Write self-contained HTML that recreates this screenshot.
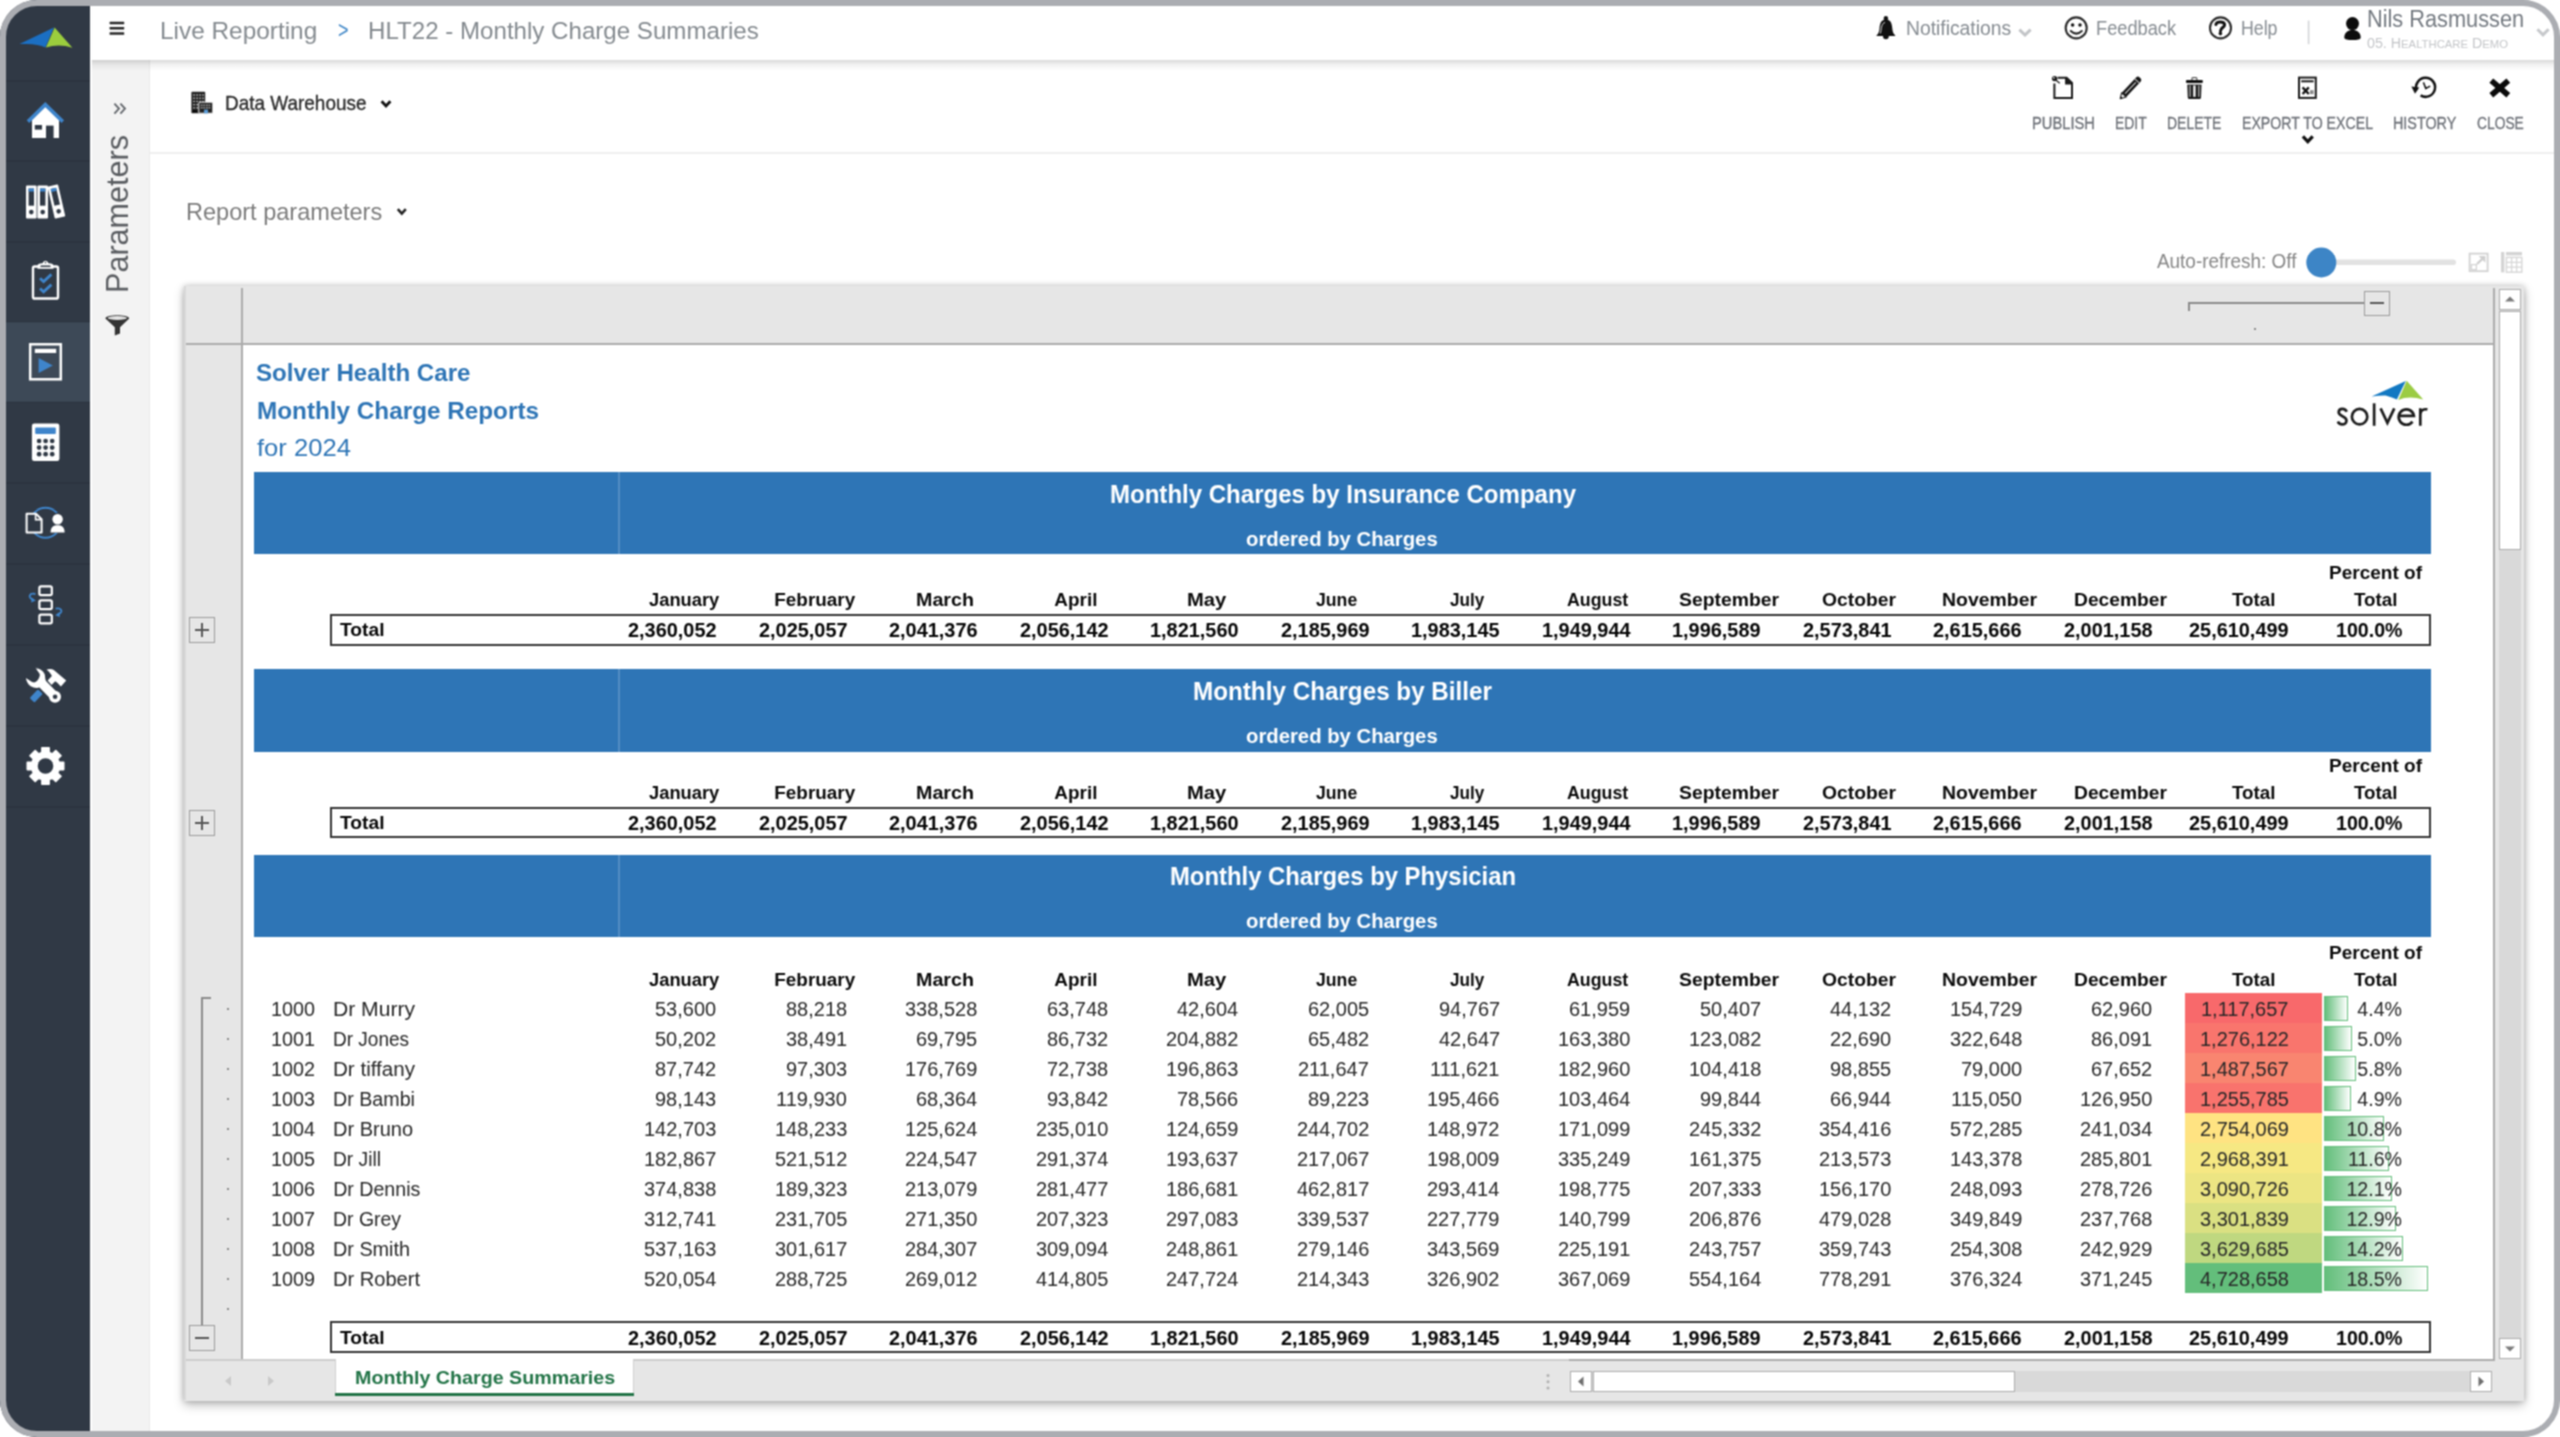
<!DOCTYPE html>
<html><head><meta charset="utf-8"><title>Live Reporting</title>
<style>
html,body{margin:0;padding:0;background:#fff;}
body{width:2560px;height:1437px;position:relative;overflow:hidden;font-family:"Liberation Sans", sans-serif;}
#w{position:absolute;left:0;top:0;width:2560px;height:1437px;overflow:hidden;background:#fff;filter:url(#bl);}
.a{position:absolute;box-sizing:border-box;}
.t{position:absolute;white-space:pre;line-height:1;transform-origin:0 50%;font-family:"Liberation Sans", sans-serif;}
</style></head>
<body>
<svg width="0" height="0" style="position:absolute"><filter id="bl" x="0" y="0" width="100%" height="100%" color-interpolation-filters="sRGB"><feConvolveMatrix order="3" kernelMatrix="1 2 1 2 4 2 1 2 1" divisor="16" edgeMode="duplicate" preserveAlpha="true"/></filter></svg>
<div id="w">
<div class="a" style="left:0px;top:0px;width:90px;height:1437px;background:#303945;"></div>
<div class="a" style="left:90px;top:0px;width:2px;height:1437px;background:#fdfdfd;"></div>
<div class="a" style="left:92px;top:60px;width:58px;height:1377px;background:#f3f3f3;border-right:1px solid #e9e9e9;"></div>
<div class="a" style="left:92px;top:60px;width:2468px;height:11px;background:linear-gradient(to bottom,rgba(0,0,0,.15),rgba(0,0,0,.05) 45%,rgba(0,0,0,0));"></div>
<div class="a" style="left:92px;top:0px;width:2468px;height:60px;background:#fff;"></div>
<div class="a" style="left:150px;top:152px;width:2410px;height:2px;background:#efefef;"></div>
<div class="a" style="left:6px;top:322px;width:84px;height:80px;background:#3d4957;"></div>
<div class="a" style="left:6px;top:79.5px;width:84px;height:2px;background:rgba(0,0,0,.07);"></div>
<div class="a" style="left:6px;top:160px;width:84px;height:2px;background:rgba(0,0,0,.07);"></div>
<div class="a" style="left:6px;top:240.5px;width:84px;height:2px;background:rgba(0,0,0,.07);"></div>
<div class="a" style="left:6px;top:321px;width:84px;height:2px;background:rgba(0,0,0,.07);"></div>
<div class="a" style="left:6px;top:401px;width:84px;height:2px;background:rgba(0,0,0,.07);"></div>
<div class="a" style="left:6px;top:482px;width:84px;height:2px;background:rgba(0,0,0,.07);"></div>
<div class="a" style="left:6px;top:563px;width:84px;height:2px;background:rgba(0,0,0,.07);"></div>
<div class="a" style="left:6px;top:644px;width:84px;height:2px;background:rgba(0,0,0,.07);"></div>
<div class="a" style="left:6px;top:725px;width:84px;height:2px;background:rgba(0,0,0,.07);"></div>
<div class="a" style="left:6px;top:806px;width:84px;height:2px;background:rgba(0,0,0,.07);"></div>
<div class="a" style="left:184px;top:286px;width:2340px;height:1115px;background:#e6e6e6;box-shadow:0 4px 10px rgba(0,0,0,.26),0 0 6px rgba(0,0,0,.20);"></div>
<div class="a" style="left:184px;top:286px;width:2px;height:1114px;background:rgba(0,0,0,.06);"></div>
<div class="a" style="left:243px;top:345px;width:2250px;height:1014px;background:#fff;"></div>
<div class="a" style="left:241px;top:288px;width:2px;height:1072px;background:#ababab;"></div>
<div class="a" style="left:186px;top:343px;width:2308px;height:2px;background:#ababab;"></div>
<div class="a" style="left:2493px;top:288px;width:2px;height:1073px;background:#ababab;"></div>
<div class="a" style="left:186px;top:1359px;width:1383px;height:2px;background:#cdcdcd;"></div>
<div class="a" style="left:1569px;top:1359px;width:926px;height:2px;background:#ababab;"></div>
<div class="a" style="left:2499px;top:289px;width:22px;height:1069px;background:#d9d9d9;"></div>
<div class="a" style="left:2499px;top:289px;width:22px;height:21px;background:#fff;border:1.5px solid #ababab;"></div>
<div class="a" style="left:2499px;top:311px;width:22px;height:239px;background:#fff;border:1.5px solid #ababab;"></div>
<div class="a" style="left:2499px;top:1337.5px;width:22px;height:21px;background:#fff;border:1.5px solid #ababab;"></div>
<svg class="a" style="left:2499px;top:289px;" width="22" height="21" viewBox="0 0 22 21"><path d="M6 12.5 L11 7.5 L16 12.5 Z" fill="#7a7a7a"/></svg>
<svg class="a" style="left:2499px;top:1337.5px;" width="22" height="21" viewBox="0 0 22 21"><path d="M6 8.5 L11 13.5 L16 8.5 Z" fill="#7a7a7a"/></svg>
<div class="a" style="left:335px;top:1359px;width:299px;height:35px;background:#fff;border-left:1px solid #d0d0d0;border-right:1px solid #d0d0d0;"></div>
<div class="a" style="left:334.5px;top:1393px;width:299.5px;height:3.3px;background:#217346;"></div>
<svg class="a" style="left:220px;top:1372px;" width="60" height="18" viewBox="0 0 60 18"><path d="M11 4 L5 9 L11 14 Z" fill="#c9c9c9"/><path d="M48 4 L54 9 L48 14 Z" fill="#c9c9c9"/></svg>
<svg class="a" style="left:1541px;top:1370px;" width="14" height="24" viewBox="0 0 14 24"><circle cx="7" cy="5.6" r="1.5" fill="#b0b0b0"/><circle cx="7" cy="11.8" r="1.5" fill="#b0b0b0"/><circle cx="7" cy="18" r="1.5" fill="#b0b0b0"/></svg>
<div class="a" style="left:1570px;top:1370.5px;width:921.5px;height:21px;background:#d9d9d9;"></div>
<div class="a" style="left:1570px;top:1370.5px;width:22px;height:21px;background:#fff;border:1.5px solid #ababab;"></div>
<div class="a" style="left:1593px;top:1370.5px;width:422px;height:21px;background:#fff;border:1.5px solid #ababab;"></div>
<div class="a" style="left:2469.5px;top:1370.5px;width:22px;height:21px;background:#fff;border:1.5px solid #ababab;"></div>
<svg class="a" style="left:1570px;top:1370.5px;" width="22" height="21" viewBox="0 0 22 21"><path d="M13.5 5.5 L8 10.5 L13.5 15.5 Z" fill="#6e6e6e"/></svg>
<svg class="a" style="left:2469.5px;top:1370.5px;" width="22" height="21" viewBox="0 0 22 21"><path d="M8.5 5.5 L14 10.5 L8.5 15.5 Z" fill="#6e6e6e"/></svg>
<div class="a" style="left:2188px;top:302px;width:178px;height:2px;background:#8a8a8a;"></div>
<div class="a" style="left:2188px;top:302px;width:2px;height:9px;background:#8a8a8a;"></div>
<div class="a" style="left:2364px;top:291px;width:26px;height:25px;background:#e6e6e6;border:1.5px solid #9a9a9a;"></div>
<div class="a" style="left:2370px;top:302px;width:14px;height:2px;background:#555;"></div>
<div class="a" style="left:2254px;top:328px;width:2px;height:2px;background:#8a8a8a;"></div>
<div class="a" style="left:189px;top:617px;width:26px;height:26px;background:#e6e6e6;border:1.5px solid #9a9a9a;"></div>
<div class="a" style="left:195px;top:629px;width:14px;height:2px;background:#555;"></div>
<div class="a" style="left:201px;top:623px;width:2px;height:14px;background:#555;"></div>
<div class="a" style="left:189px;top:810px;width:26px;height:26px;background:#e6e6e6;border:1.5px solid #9a9a9a;"></div>
<div class="a" style="left:195px;top:822px;width:14px;height:2px;background:#555;"></div>
<div class="a" style="left:201px;top:816px;width:2px;height:14px;background:#555;"></div>
<div class="a" style="left:189px;top:1325px;width:26px;height:26px;background:#e6e6e6;border:1.5px solid #9a9a9a;"></div>
<div class="a" style="left:195px;top:1337px;width:14px;height:2px;background:#555;"></div>
<div class="a" style="left:201px;top:997px;width:2px;height:328px;background:#8a8a8a;"></div>
<div class="a" style="left:201px;top:997px;width:10px;height:2px;background:#8a8a8a;"></div>
<div class="a" style="left:227px;top:1008px;width:2px;height:2px;background:#8a8a8a;"></div>
<div class="a" style="left:227px;top:1038px;width:2px;height:2px;background:#8a8a8a;"></div>
<div class="a" style="left:227px;top:1068px;width:2px;height:2px;background:#8a8a8a;"></div>
<div class="a" style="left:227px;top:1098px;width:2px;height:2px;background:#8a8a8a;"></div>
<div class="a" style="left:227px;top:1128px;width:2px;height:2px;background:#8a8a8a;"></div>
<div class="a" style="left:227px;top:1158px;width:2px;height:2px;background:#8a8a8a;"></div>
<div class="a" style="left:227px;top:1188px;width:2px;height:2px;background:#8a8a8a;"></div>
<div class="a" style="left:227px;top:1218px;width:2px;height:2px;background:#8a8a8a;"></div>
<div class="a" style="left:227px;top:1248px;width:2px;height:2px;background:#8a8a8a;"></div>
<div class="a" style="left:227px;top:1278px;width:2px;height:2px;background:#8a8a8a;"></div>
<div class="a" style="left:227px;top:1308px;width:2px;height:2px;background:#8a8a8a;"></div>
<div class="a" style="left:253.5px;top:471.7px;width:2177.5px;height:82.1px;background:#2e75b6;"></div>
<div class="a" style="left:618px;top:471.7px;width:1.5px;height:82.1px;background:rgba(255,255,255,.18);"></div>
<div class="a" style="left:253.5px;top:669.0px;width:2177.5px;height:82.7px;background:#2e75b6;"></div>
<div class="a" style="left:618px;top:669.0px;width:1.5px;height:82.7px;background:rgba(255,255,255,.18);"></div>
<div class="a" style="left:253.5px;top:854.7px;width:2177.5px;height:82.2px;background:#2e75b6;"></div>
<div class="a" style="left:618px;top:854.7px;width:1.5px;height:82.2px;background:rgba(255,255,255,.18);"></div>
<div class="a" style="left:329.6px;top:613.5px;width:2101.4px;height:32px;border:2px solid #333;"></div>
<div class="a" style="left:329.6px;top:806.9px;width:2101.4px;height:31.1px;border:2px solid #333;"></div>
<div class="a" style="left:329.6px;top:1321.4px;width:2101.4px;height:31.2px;border:2px solid #333;"></div>
<div class="a" style="left:2185px;top:992.8px;width:137px;height:30.29px;background:rgb(248,105,107);"></div>
<div class="a" style="left:2323.6px;top:995.9px;width:24.7px;height:24.79px;border:1.5px solid #63be7b;background:linear-gradient(to right,#63be7b,#fff);"></div>
<div class="a" style="left:2185px;top:1022.8px;width:137px;height:30.29px;background:rgb(249,117,109);"></div>
<div class="a" style="left:2323.6px;top:1025.9px;width:28.1px;height:24.79px;border:1.5px solid #63be7b;background:linear-gradient(to right,#63be7b,#fff);"></div>
<div class="a" style="left:2185px;top:1052.8px;width:137px;height:30.29px;background:rgb(249,133,112);"></div>
<div class="a" style="left:2323.6px;top:1055.9px;width:32.6px;height:24.79px;border:1.5px solid #63be7b;background:linear-gradient(to right,#63be7b,#fff);"></div>
<div class="a" style="left:2185px;top:1082.8px;width:137px;height:30.29px;background:rgb(249,115,109);"></div>
<div class="a" style="left:2323.6px;top:1085.9px;width:27.5px;height:24.79px;border:1.5px solid #63be7b;background:linear-gradient(to right,#63be7b,#fff);"></div>
<div class="a" style="left:2185px;top:1112.8px;width:137px;height:30.29px;background:rgb(255,227,130);"></div>
<div class="a" style="left:2323.6px;top:1115.9px;width:60.7px;height:24.79px;border:1.5px solid #63be7b;background:linear-gradient(to right,#63be7b,#fff);"></div>
<div class="a" style="left:2185px;top:1142.8px;width:137px;height:30.29px;background:rgb(246,232,131);"></div>
<div class="a" style="left:2323.6px;top:1145.8px;width:65.2px;height:24.79px;border:1.5px solid #63be7b;background:linear-gradient(to right,#63be7b,#fff);"></div>
<div class="a" style="left:2185px;top:1172.7px;width:137px;height:30.29px;background:rgb(236,229,131);"></div>
<div class="a" style="left:2323.6px;top:1175.8px;width:68.0px;height:24.79px;border:1.5px solid #63be7b;background:linear-gradient(to right,#63be7b,#fff);"></div>
<div class="a" style="left:2185px;top:1202.7px;width:137px;height:30.29px;background:rgb(218,224,130);"></div>
<div class="a" style="left:2323.6px;top:1205.8px;width:72.5px;height:24.79px;border:1.5px solid #63be7b;background:linear-gradient(to right,#63be7b,#fff);"></div>
<div class="a" style="left:2185px;top:1232.7px;width:137px;height:30.29px;background:rgb(191,216,128);"></div>
<div class="a" style="left:2323.6px;top:1235.8px;width:79.8px;height:24.79px;border:1.5px solid #63be7b;background:linear-gradient(to right,#63be7b,#fff);"></div>
<div class="a" style="left:2185px;top:1262.7px;width:137px;height:30.29px;background:rgb(99,190,123);"></div>
<div class="a" style="left:2323.6px;top:1265.8px;width:104.0px;height:24.79px;border:1.5px solid #63be7b;background:linear-gradient(to right,#63be7b,#fff);"></div>
<svg class="a" style="left:0;top:0" width="2560" height="1437" viewBox="0 0 2560 1437"><path d="M19.5 44.1 L53.9 27.6 L45.4 47.4 Q37 43 19.5 44.1 Z" fill="#1b6fc3"/><path d="M54.6 27.6 L72.4 47.8 Q59 43.2 45.9 47.6 Z" fill="#9bcd3d"/><path d="M32 117.5 L45.3 106.5 L59 117.5 L59 138 L32 138 Z" fill="#fff"/><rect x="34.8" y="125" width="7.2" height="4.6" fill="#303945"/><rect x="46" y="125.6" width="7.6" height="12.6" fill="#303945"/><path d="M28 121.6 L45.3 104.6 L62.8 121.6" fill="none" stroke="#3f85cb" stroke-width="3.6" stroke-linejoin="miter"/><g><rect x="26" y="185.5" width="10.6" height="33" rx="1" fill="#fff"/><rect x="28.6" y="188.5" width="5.3999999999999995" height="17.2" fill="#303945"/><rect x="28.6" y="188.5" width="5.3999999999999995" height="3" fill="#3f85cb"/><circle cx="31.3" cy="212.1" r="2.3" fill="#303945"/></g><g><rect x="37.4" y="185.5" width="10.6" height="33" rx="1" fill="#fff"/><rect x="40.0" y="188.5" width="5.3999999999999995" height="17.2" fill="#303945"/><rect x="40.0" y="188.5" width="5.3999999999999995" height="3" fill="#3f85cb"/><circle cx="42.699999999999996" cy="212.1" r="2.3" fill="#303945"/></g><g transform="rotate(-13 56.4 201.5)"><rect x="51" y="185" width="10.8" height="33" rx="1" fill="#fff"/><rect x="53.6" y="188" width="5.6000000000000005" height="17.2" fill="#303945"/><rect x="53.6" y="188" width="5.6000000000000005" height="3" fill="#3f85cb"/><circle cx="56.4" cy="211.6" r="2.3" fill="#303945"/></g><rect x="33" y="266.5" width="25" height="32" rx="1.6" fill="none" stroke="#fff" stroke-width="2.4"/><path d="M37.5 268.8 L37.5 265.5 Q37.5 263.6 40 263.4 L42.4 263.2 Q45.5 258.4 48.6 263.2 L51 263.4 Q53.5 263.6 53.5 265.5 L53.5 268.8 Z" fill="#fff"/><rect x="40.4" y="265.6" width="10.2" height="1.5" rx=".7" fill="#303945"/><circle cx="45.5" cy="262.6" r=".8" fill="#303945"/><path d="M40 278.2 L43.6 281.6 L51.4 274.4 M40 288.4 L43.6 291.8 L51.4 284.6" fill="none" stroke="#3f85cb" stroke-width="2.8"/><rect x="30.2" y="344.3" width="30.6" height="35" fill="none" stroke="#fff" stroke-width="2.5"/><rect x="34.8" y="348.8" width="21.4" height="4.2" fill="#fff"/><path d="M38.6 358 L52.8 365.5 L38.6 373 Z" fill="#3f85cb"/><rect x="31.9" y="423.5" width="27.5" height="37.6" rx="2.4" fill="#fff"/><rect x="35.2" y="427.4" width="20.6" height="6.6" rx="1" fill="#3f85cb"/><circle cx="39.1" cy="441" r="2.35" fill="#303945"/><circle cx="39.1" cy="447.6" r="2.35" fill="#303945"/><circle cx="39.1" cy="454.2" r="2.35" fill="#303945"/><circle cx="45.6" cy="441" r="2.35" fill="#303945"/><circle cx="45.6" cy="447.6" r="2.35" fill="#303945"/><circle cx="45.6" cy="454.2" r="2.35" fill="#303945"/><circle cx="52.2" cy="441" r="2.35" fill="#303945"/><circle cx="52.2" cy="447.6" r="2.35" fill="#303945"/><circle cx="52.2" cy="454.2" r="2.35" fill="#303945"/><circle cx="45.5" cy="522.8" r="15" fill="none" stroke="#3f85cb" stroke-width="2"/><path d="M26.6 513.8 L36 513.8 L41.6 519.2 L41.6 532.6 L26.6 532.6 Z" fill="#303945" stroke="#fff" stroke-width="2" stroke-linejoin="round"/><path d="M35.6 514.2 L35.6 519.6 L41.2 519.6" fill="none" stroke="#fff" stroke-width="1.6"/><circle cx="57.6" cy="519.4" r="6.6" fill="#303945"/><path d="M49 533 L49 524 L66 524 L66 533 Z" fill="#303945"/><circle cx="57.6" cy="519.2" r="5.2" fill="#fff"/><path d="M50.6 532.4 C50.6 527 53.6 525.2 57.6 525.2 C61.6 525.2 64.6 527 64.6 532.4 Z" fill="#fff"/><rect x="39.4" y="586.4" width="12.4" height="8.8" rx="1.6" fill="none" stroke="#fff" stroke-width="2.2"/><rect x="39.4" y="600.4" width="12.4" height="8.8" rx="1.6" fill="none" stroke="#fff" stroke-width="2.2"/><rect x="39.4" y="614.6" width="12.4" height="8.8" rx="1.6" fill="none" stroke="#fff" stroke-width="2.2"/><path d="M35.4 594 C29 592.6 27.6 597.8 33 599.6" fill="none" stroke="#3f85cb" stroke-width="1.8"/><path d="M31.6 597.4 L35.8 600.6 L31.2 602.4 Z" fill="#3f85cb"/><path d="M55.6 608.6 C62 607.4 63.6 612.6 58 614.2" fill="none" stroke="#3f85cb" stroke-width="1.8"/><path d="M59.6 612 L55.2 615.2 L59.8 617 Z" fill="#3f85cb"/><rect x="30.2" y="692.5" width="12.1" height="6.8" rx="1.4" fill="#3f85cb" transform="rotate(133.5 36.25 695.9)"/><path d="M46.5 669.8 C49 668.5 52 668.9 53.8 669.9 L60.3 675.4 L66.2 680.6 L60.9 686.6 L57.3 682.8 L55.2 681.2 L51.5 684.9 L47.6 680.6 L51.9 676 C51 674 49.6 672 46.5 669.8 Z" fill="#fff"/><path d="M34.8 668.1 C39 667 43.8 669.8 45.3 674 C46.3 677.4 45.4 680 47 682.4 L40 688.2 C36 689.4 30.5 688.4 27.8 684.4 C26 681.6 25 679 25.4 676.9 L32.4 681.4 C34 682 36 681.4 36.9 680.2 C38.6 678 39.6 676 39 674 Z" fill="#fff" stroke="#303945" stroke-width="1.3"/><path d="M42.6 684.2 L55 696.7" stroke="#303945" stroke-width="11.4" fill="none"/><circle cx="55" cy="696.7" r="6.7" fill="#303945"/><path d="M41 682.6 L55 696.7" stroke="#fff" stroke-width="9.2" fill="none"/><circle cx="55" cy="696.7" r="6" fill="#fff"/><circle cx="55.1" cy="696.8" r="2.3" fill="#303945"/><path d="M41.9 752.5 L41.9 747.8 L49.1 747.8 L49.1 752.5 L52.5 753.9 L55.8 750.5 L61.0 755.7 L57.6 759.0 L59.0 762.4 L63.7 762.4 L63.7 769.6 L59.0 769.6 L57.6 773.0 L61.0 776.3 L55.8 781.5 L52.5 778.1 L49.1 779.5 L49.1 784.2 L41.9 784.2 L41.9 779.5 L38.5 778.1 L35.2 781.5 L30.0 776.3 L33.4 773.0 L32.0 769.6 L27.3 769.6 L27.3 762.4 L32.0 762.4 L33.4 759.0 L30.0 755.7 L35.2 750.5 L38.5 753.9 Z" fill="#fff" stroke="#fff" stroke-width="1.6" stroke-linejoin="round"/><circle cx="45.5" cy="766" r="7.8" fill="#303945"/><rect x="109.6" y="21.7" width="14.6" height="2.5" rx=".4" fill="#262626"/><rect x="109.6" y="27" width="14.6" height="2.5" rx=".4" fill="#262626"/><rect x="109.6" y="32.3" width="14.6" height="2.5" rx=".4" fill="#262626"/><g transform="translate(1866 8)"><circle cx="19.9" cy="10.3" r="2.2" fill="#111"/><path d="M19.9 11.6 C16 11.6 13.9 14.2 13.5 20.6 C13.2 24.6 12.2 26 10.6 27.2 L10.6 28.1 L29.2 28.1 L29.2 27.2 C27.6 26 26.6 24.6 26.3 20.6 C25.9 14.2 23.8 11.6 19.9 11.6 Z" fill="#111"/><path d="M17 28 A2.9 3.2 0 0 0 22.8 28 Z" fill="#111"/><path d="M14.3 25.4 C15.6 22 14.6 16 19 14.4" stroke="#fff" stroke-width="1" fill="none" opacity=".85"/></g><path d="M2019.4 29.6 L2025 35 L2030.6 29.6" fill="none" stroke="#c2c4c7" stroke-width="3"/><circle cx="2076.2" cy="27.9" r="10.5" fill="none" stroke="#2a2a2a" stroke-width="2.1"/><circle cx="2072.6" cy="25" r="1.75" fill="#111"/><circle cx="2080" cy="25" r="1.75" fill="#111"/><path d="M2070.8 31 Q2076.3 36.2 2081.8 31" fill="none" stroke="#222" stroke-width="2" stroke-linecap="round"/><circle cx="2220.5" cy="27.9" r="10.5" fill="none" stroke="#2a2a2a" stroke-width="2.1"/><path d="M2215.9 24.6 C2216.4 21.4 2224.6 20.8 2224.6 24.8 C2224.6 27.6 2220.5 27.6 2220.5 31" fill="none" stroke="#111" stroke-width="3" stroke-linecap="round" stroke-linejoin="round"/><circle cx="2220.4" cy="33.6" r="1.8" fill="#111"/><rect x="2307.8" y="20.6" width="1.6" height="23.6" fill="#d2d4d7"/><circle cx="2352.5" cy="23.6" r="6.5" fill="#0c0c0c"/><path d="M2344.3 37.4 C2344.3 32.6 2348 30 2352.5 30 C2357 30 2360.7 32.6 2360.7 37.4 C2360.7 39.4 2357 40 2352.5 40 C2348 40 2344.3 39.4 2344.3 37.4 Z" fill="#0c0c0c"/><path d="M2537.4 29.2 L2543 34.8 L2548.6 29.2" fill="none" stroke="#c6c8cb" stroke-width="3"/><path d="M114.4 103.6 L119 108.6 L114.4 113.6 M120.4 103.6 L125 108.6 L120.4 113.6" fill="none" stroke="#63676c" stroke-width="1.9"/><path d="M105.4 318.6 C105.4 314.2 129.2 314.2 129.2 318.6 L120 327.2 L120 333.4 L114.8 335.4 L114.8 327.2 Z" fill="#333"/><ellipse cx="117.3" cy="318" rx="9.6" ry="1.9" fill="#e4e4e4"/><rect x="191.4" y="91.8" width="13.8" height="21.4" rx=".8" fill="#222"/><rect x="198.8" y="102.2" width="14" height="11" rx=".8" fill="#222" stroke="#fff" stroke-width=".9"/><rect x="193.2" y="94.4" width="1.8" height="1.3" fill="#bdbdbd"/><rect x="196.2" y="94.4" width="1.8" height="1.3" fill="#bdbdbd"/><rect x="199.2" y="94.4" width="1.8" height="1.3" fill="#bdbdbd"/><rect x="202.2" y="94.4" width="1.8" height="1.3" fill="#bdbdbd"/><rect x="193.2" y="97.6" width="1.8" height="1.3" fill="#bdbdbd"/><rect x="196.2" y="97.6" width="1.8" height="1.3" fill="#bdbdbd"/><rect x="199.2" y="97.6" width="1.8" height="1.3" fill="#bdbdbd"/><rect x="202.2" y="97.6" width="1.8" height="1.3" fill="#bdbdbd"/><rect x="193.2" y="100.8" width="1.8" height="1.3" fill="#bdbdbd"/><rect x="196.2" y="100.8" width="1.8" height="1.3" fill="#bdbdbd"/><rect x="199.2" y="100.8" width="1.8" height="1.3" fill="#bdbdbd"/><rect x="202.2" y="100.8" width="1.8" height="1.3" fill="#bdbdbd"/><rect x="193.2" y="104" width="1.8" height="1.3" fill="#bdbdbd"/><rect x="196.2" y="104" width="1.8" height="1.3" fill="#bdbdbd"/><rect x="193.2" y="107.2" width="1.8" height="1.3" fill="#bdbdbd"/><rect x="196.2" y="107.2" width="1.8" height="1.3" fill="#bdbdbd"/><rect x="200.8" y="104.6" width="1.7" height="1.2" fill="#c8c8c8"/><rect x="203.4" y="104.6" width="1.7" height="1.2" fill="#c8c8c8"/><rect x="206" y="104.6" width="1.7" height="1.2" fill="#c8c8c8"/><rect x="208.6" y="104.6" width="1.7" height="1.2" fill="#c8c8c8"/><rect x="200.8" y="107.2" width="1.7" height="1.2" fill="#c8c8c8"/><rect x="203.4" y="107.2" width="1.7" height="1.2" fill="#c8c8c8"/><rect x="206" y="107.2" width="1.7" height="1.2" fill="#c8c8c8"/><rect x="208.6" y="107.2" width="1.7" height="1.2" fill="#c8c8c8"/><rect x="204" y="109.6" width="4" height="3.8" fill="#5b9bd5"/><rect x="192.6" y="110.4" width="4.2" height="1.6" fill="#000"/><path d="M381.6 101.19999999999999 L386 106.0 L390.4 101.19999999999999" fill="none" stroke="#111" stroke-width="2.8" stroke-linejoin="miter"/><path d="M397.8 209.20000000000002 L401.8 213.6 L405.8 209.20000000000002" fill="none" stroke="#222" stroke-width="2.6" stroke-linejoin="miter"/><path d="M2302.9 136.3 L2307.8 141.7 L2312.7000000000003 136.3" fill="none" stroke="#111" stroke-width="3.2" stroke-linejoin="miter"/><path d="M2057.6 77.8 L2066.6 77.8 L2072 83 L2072 97.9 L2054.4 97.9 L2054.4 83.4" fill="none" stroke="#1a1a1a" stroke-width="2"/><path d="M2066 77.8 L2066 83.6 L2072 83.6" fill="none" stroke="#1a1a1a" stroke-width="1.8"/><path d="M2066 78 L2071.8 83.6 L2066 83.6 Z" fill="#1a1a1a"/><circle cx="2054.6" cy="78.6" r="2.7" fill="#1a1a1a"/><circle cx="2053.8" cy="77.8" r=".9" fill="#ddd"/><path d="M2056 80.2 L2059.8 83.2" stroke="#1a1a1a" stroke-width="1.3"/><g transform="translate(2130.6 87.8) rotate(-46.5)"><path d="M-9.6 -3.1 L11.2 -3.1 Q13.8 -3.1 13.8 -0.6 L13.8 .6 Q13.8 3.1 11.2 3.1 L-9.6 3.1 Z" fill="#161616"/><path d="M-9.8 -3.1 L-15 0 L-9.8 3.1 Z" fill="#fff" stroke="#161616" stroke-width="1.1" stroke-linejoin="round"/><path d="M-15 0 L-12.8 -1.3 L-12.8 1.3 Z" fill="#161616"/><rect x="-8" y="-.55" width="15.6" height="1.1" fill="#d8d8d8"/><rect x="9" y="-3.1" width="1" height="6.2" fill="#cfcfcf"/></g><rect x="2191.9" y="77.6" width="5" height="3" rx="1" fill="none" stroke="#555" stroke-width="1.2"/><rect x="2185.9" y="80" width="17" height="3" rx="1.2" fill="#111"/><path d="M2187.3 84.4 L2201.5 84.4 L2201 97.4 Q2201 99 2199.4 99 L2189.4 99 Q2187.8 99 2187.8 97.4 Z" fill="#1a1a1a"/><rect x="2189.2" y="85.4" width="1.6" height="11.4" fill="#9a9a9a"/><rect x="2193.2" y="85.4" width="2.4" height="11.4" fill="#f4f4f4"/><rect x="2198" y="85.4" width="1.6" height="11.4" fill="#9a9a9a"/><rect x="2299" y="77.6" width="16.8" height="20.3" fill="none" stroke="#1a1a1a" stroke-width="2"/><rect x="2301.2" y="80.3" width="12.4" height="2" fill="#1a1a1a"/><path d="M2302.6 87.4 L2308.8 94 M2308.8 87.4 L2302.6 94" stroke="#111" stroke-width="2.3" fill="none"/><rect x="2310" y="90.2" width="3.6" height="3.9" fill="#8a8a8a"/><path d="M2416.6 90.4 A9.5 9.5 0 1 1 2420.6 95.4" fill="none" stroke="#111" stroke-width="2.5"/><path d="M2411.4 86.6 L2419.2 87.6 L2415 93.8 Z" fill="#111"/><path d="M2423.4 82.4 L2425.8 88.4 L2430.2 86.2" fill="none" stroke="#111" stroke-width="1.5"/><path d="M2424.6 86.4 L2427.6 87.4 L2425.6 89.6 Z" fill="#111"/><path d="M2491.3 80.6 L2508.3 95.2 M2508.3 80.6 L2491.3 95.2" stroke="#0a0a0a" stroke-width="5.8" fill="none"/><rect x="2322" y="259.4" width="134" height="5.6" rx="2.8" fill="#e2e2e2"/><circle cx="2321.3" cy="262.5" r="15" fill="#3d85c6"/><rect x="2469.6" y="253.6" width="18" height="17.6" fill="none" stroke="#d2d2d2" stroke-width="1.8"/><rect x="2471.4" y="264.6" width="5" height="5" fill="#fff" stroke="#d2d2d2" stroke-width="1.2"/><path d="M2477 264 L2484.4 256.8" stroke="#cfcfcf" stroke-width="2.4"/><path d="M2478.6 256 L2485.4 256 L2485.4 262.8 Z" fill="#cfcfcf"/><rect x="2501" y="252" width="3.4" height="20.4" fill="#d4d4d4"/><rect x="2506" y="252" width="16" height="3.4" fill="#d4d4d4"/><rect x="2506.4" y="257.4" width="15.4" height="14.8" fill="none" stroke="#d6d6d6" stroke-width="1.4"/><path d="M2511.6 257.4 V272.2 M2516.6 257.4 V272.2 M2506.4 262.4 H2521.8 M2506.4 267.2 H2521.8" stroke="#d6d6d6" stroke-width="1.2" fill="none"/><path d="M2371.6 396.5 L2405.8 381 L2396.9 399.6 Q2392.6 397.4 2385.6 395.6 Q2380 395.4 2371.6 396.5 Z" fill="#1278c2"/><path d="M2406.7 380.8 L2423.2 399.6 Q2409.1 395.4 2398.3 400 Z" fill="#9bcc43"/><path d="M2346.7 411.8 C2345.8 409.6 2344 408.9 2342.4 408.9 C2340 408.9 2338.7 410.5 2338.7 412.3 C2338.7 416.9 2346.5 415.5 2346.5 420.5 C2346.5 423 2344.5 424.4 2342.2 424.4 C2340.2 424.4 2338.6 423.4 2337.9 421.5" fill="none" stroke="#1c1c1c" stroke-width="2.7"/><circle cx="2359.6" cy="416.65" r="7.7" fill="none" stroke="#1c1c1c" stroke-width="2.7"/><path d="M2374.15 403.3 L2374.15 425.8" fill="none" stroke="#1c1c1c" stroke-width="2.7"/><path d="M2380.6 408.4 L2387.4 422.9 L2394.3 408.4" fill="none" stroke="#1c1c1c" stroke-width="2.7" stroke-linejoin="miter" stroke-miterlimit="6"/><path d="M2398.8 415.9 L2413.9 415.9 A7.65 7.7 0 1 0 2412.5 421.6" fill="none" stroke="#1c1c1c" stroke-width="2.7"/><path d="M2420.3 425.8 L2420.3 408.2 M2420.3 414.6 C2420.4 410.6 2423.2 408.7 2427.4 409.4" fill="none" stroke="#1c1c1c" stroke-width="2.7"/></svg>
<div class="a" style="left:106px;top:134.5px;width:24px;height:158px;"><span style="position:absolute;left:12px;top:79px;white-space:pre;font-size:31.6px;line-height:1;color:#5a5d61;transform:translate(-50%,-50%) rotate(-90deg) scaleX(.967);display:block;">Parameters</span></div>
<span class="t" style="left:160.40px;top:18.97px;font-size:23.9px;color:#848a8f;transform:scaleX(1.0204);">Live Reporting</span>
<span class="t" style="left:337.50px;top:19.31px;font-size:23.5px;color:#3d85c6;transform:scaleX(0.7645);">&gt;</span>
<span class="t" style="left:367.80px;top:18.97px;font-size:23.9px;color:#848a8f;transform:scaleX(1.0091);">HLT22 - Monthly Charge Summaries</span>
<span class="t" style="left:1906.30px;top:19.15px;font-size:19.9px;color:#858b91;transform:scaleX(0.9701);">Notifications</span>
<span class="t" style="left:2096.30px;top:19.15px;font-size:19.9px;color:#858b91;transform:scaleX(0.9169);">Feedback</span>
<span class="t" style="left:2240.50px;top:19.15px;font-size:19.9px;color:#858b91;transform:scaleX(0.8919);">Help</span>
<span class="t" style="left:2367.40px;top:7.73px;font-size:23.0px;color:#737980;transform:scaleX(0.9455);">Nils Rasmussen</span>
<span class="t" style="left:2366.60px;top:36.44px;font-size:14.6px;color:#c3c5c8;transform:scaleX(0.9756);">05. H<span style="font-size:11.6px">EALTHCARE</span> D<span style="font-size:11.6px">EMO</span></span>
<span class="t" style="left:225.40px;top:92.56px;font-size:20.6px;color:#2b2b2b;transform:scaleX(0.9201);-webkit-text-stroke:.35px #2b2b2b;">Data Warehouse</span>
<span class="t" style="left:2032.20px;top:115.16px;font-size:17.3px;color:#6b6f76;transform:scaleX(0.8519);-webkit-text-stroke:.3px #6b6f76;">PUBLISH</span>
<span class="t" style="left:2115.10px;top:115.16px;font-size:17.3px;color:#6b6f76;transform:scaleX(0.8051);-webkit-text-stroke:.3px #6b6f76;">EDIT</span>
<span class="t" style="left:2167.40px;top:115.16px;font-size:17.3px;color:#6b6f76;transform:scaleX(0.8091);-webkit-text-stroke:.3px #6b6f76;">DELETE</span>
<span class="t" style="left:2241.90px;top:115.16px;font-size:17.3px;color:#6b6f76;transform:scaleX(0.8183);-webkit-text-stroke:.3px #6b6f76;">EXPORT TO EXCEL</span>
<span class="t" style="left:2393.10px;top:115.16px;font-size:17.3px;color:#6b6f76;transform:scaleX(0.8308);-webkit-text-stroke:.3px #6b6f76;">HISTORY</span>
<span class="t" style="left:2476.80px;top:115.16px;font-size:17.3px;color:#6b6f76;transform:scaleX(0.7987);-webkit-text-stroke:.3px #6b6f76;">CLOSE</span>
<span class="t" style="left:186.30px;top:199.78px;font-size:24.6px;color:#7b7b7b;transform:scaleX(0.9569);">Report parameters</span>
<span class="t" style="left:2156.90px;top:251.33px;font-size:20.4px;color:#858585;transform:scaleX(0.9271);">Auto-refresh: Off</span>
<span class="t" style="left:256.00px;top:361.54px;font-size:23.7px;color:#2e75b6;font-weight:700;transform:scaleX(1.0182);">Solver Health Care</span>
<span class="t" style="left:256.60px;top:399.84px;font-size:23.7px;color:#2e75b6;font-weight:700;transform:scaleX(1.0252);">Monthly Charge Reports</span>
<span class="t" style="left:256.60px;top:436.94px;font-size:23.7px;color:#2e75b6;transform:scaleX(1.0814);">for 2024</span>
<span class="t" style="left:1109.50px;top:481.75px;font-size:25.1px;color:#fff;font-weight:700;transform:scaleX(0.9576);">Monthly Charges by Insurance Company</span>
<span class="t" style="left:1246.35px;top:528.57px;font-size:20px;color:#fff;font-weight:700;transform:scaleX(1.0145);">ordered by Charges</span>
<span class="t" style="left:1193.00px;top:678.85px;font-size:25.1px;color:#fff;font-weight:700;transform:scaleX(0.9659);">Monthly Charges by Biller</span>
<span class="t" style="left:1246.35px;top:725.67px;font-size:20px;color:#fff;font-weight:700;transform:scaleX(1.0145);">ordered by Charges</span>
<span class="t" style="left:1169.50px;top:864.15px;font-size:25.1px;color:#fff;font-weight:700;transform:scaleX(0.9507);">Monthly Charges by Physician</span>
<span class="t" style="left:1246.35px;top:910.97px;font-size:20px;color:#fff;font-weight:700;transform:scaleX(1.0145);">ordered by Charges</span>
<span class="t" style="left:649.12px;top:591.40px;font-size:18.9px;color:#0a0a0a;font-weight:700;transform:scaleX(0.9701);">January</span>
<span class="t" style="left:774.30px;top:591.40px;font-size:18.9px;color:#0a0a0a;font-weight:700;">February</span>
<span class="t" style="left:916.33px;top:591.40px;font-size:18.9px;color:#0a0a0a;font-weight:700;transform:scaleX(1.0424);">March</span>
<span class="t" style="left:1054.36px;top:591.40px;font-size:18.9px;color:#0a0a0a;font-weight:700;">April</span>
<span class="t" style="left:1186.73px;top:591.40px;font-size:18.9px;color:#0a0a0a;font-weight:700;transform:scaleX(1.0694);">May</span>
<span class="t" style="left:1316.32px;top:591.40px;font-size:18.9px;color:#0a0a0a;font-weight:700;transform:scaleX(0.9344);">June</span>
<span class="t" style="left:1450.30px;top:591.40px;font-size:18.9px;color:#0a0a0a;font-weight:700;transform:scaleX(0.9071);">July</span>
<span class="t" style="left:1567.32px;top:591.40px;font-size:18.9px;color:#0a0a0a;font-weight:700;transform:scaleX(0.9422);">August</span>
<span class="t" style="left:1678.51px;top:591.40px;font-size:18.9px;color:#0a0a0a;font-weight:700;transform:scaleX(1.0242);">September</span>
<span class="t" style="left:1822.04px;top:591.40px;font-size:18.9px;color:#0a0a0a;font-weight:700;transform:scaleX(1.0216);">October</span>
<span class="t" style="left:1942.07px;top:591.40px;font-size:18.9px;color:#0a0a0a;font-weight:700;transform:scaleX(1.0282);">November</span>
<span class="t" style="left:2073.60px;top:591.40px;font-size:18.9px;color:#0a0a0a;font-weight:700;transform:scaleX(1.0180);">December</span>
<span class="t" style="left:2231.75px;top:591.40px;font-size:18.9px;color:#0a0a0a;font-weight:700;transform:scaleX(0.9946);">Total</span>
<span class="t" style="left:2353.75px;top:591.40px;font-size:18.9px;color:#0a0a0a;font-weight:700;transform:scaleX(0.9946);">Total</span>
<span class="t" style="left:2329.00px;top:564.30px;font-size:18.9px;color:#0a0a0a;font-weight:700;transform:scaleX(1.0066);">Percent of</span>
<span class="t" style="left:340.00px;top:621.10px;font-size:18.9px;color:#050505;font-weight:700;transform:scaleX(1.0175);">Total</span>
<span class="t" style="left:627.97px;top:620.76px;font-size:19.3px;color:#050505;font-weight:700;transform:scaleX(1.0320);">2,360,052</span>
<span class="t" style="left:758.50px;top:620.76px;font-size:19.3px;color:#050505;font-weight:700;transform:scaleX(1.0320);">2,025,057</span>
<span class="t" style="left:889.03px;top:620.76px;font-size:19.3px;color:#050505;font-weight:700;transform:scaleX(1.0320);">2,041,376</span>
<span class="t" style="left:1019.56px;top:620.76px;font-size:19.3px;color:#050505;font-weight:700;transform:scaleX(1.0320);">2,056,142</span>
<span class="t" style="left:1150.09px;top:620.76px;font-size:19.3px;color:#050505;font-weight:700;transform:scaleX(1.0320);">1,821,560</span>
<span class="t" style="left:1280.62px;top:620.76px;font-size:19.3px;color:#050505;font-weight:700;transform:scaleX(1.0320);">2,185,969</span>
<span class="t" style="left:1411.15px;top:620.76px;font-size:19.3px;color:#050505;font-weight:700;transform:scaleX(1.0320);">1,983,145</span>
<span class="t" style="left:1541.68px;top:620.76px;font-size:19.3px;color:#050505;font-weight:700;transform:scaleX(1.0320);">1,949,944</span>
<span class="t" style="left:1672.21px;top:620.76px;font-size:19.3px;color:#050505;font-weight:700;transform:scaleX(1.0320);">1,996,589</span>
<span class="t" style="left:1802.74px;top:620.76px;font-size:19.3px;color:#050505;font-weight:700;transform:scaleX(1.0320);">2,573,841</span>
<span class="t" style="left:1933.27px;top:620.76px;font-size:19.3px;color:#050505;font-weight:700;transform:scaleX(1.0320);">2,615,666</span>
<span class="t" style="left:2063.80px;top:620.76px;font-size:19.3px;color:#050505;font-weight:700;transform:scaleX(1.0320);">2,001,158</span>
<span class="t" style="left:2188.90px;top:620.76px;font-size:19.3px;color:#050505;font-weight:700;transform:scaleX(1.0320);">25,610,499</span>
<span class="t" style="left:2335.55px;top:620.76px;font-size:19.3px;color:#050505;font-weight:700;transform:scaleX(1.0160);">100.0%</span>
<span class="t" style="left:649.12px;top:783.90px;font-size:18.9px;color:#0a0a0a;font-weight:700;transform:scaleX(0.9701);">January</span>
<span class="t" style="left:774.30px;top:783.90px;font-size:18.9px;color:#0a0a0a;font-weight:700;">February</span>
<span class="t" style="left:916.33px;top:783.90px;font-size:18.9px;color:#0a0a0a;font-weight:700;transform:scaleX(1.0424);">March</span>
<span class="t" style="left:1054.36px;top:783.90px;font-size:18.9px;color:#0a0a0a;font-weight:700;">April</span>
<span class="t" style="left:1186.73px;top:783.90px;font-size:18.9px;color:#0a0a0a;font-weight:700;transform:scaleX(1.0694);">May</span>
<span class="t" style="left:1316.32px;top:783.90px;font-size:18.9px;color:#0a0a0a;font-weight:700;transform:scaleX(0.9344);">June</span>
<span class="t" style="left:1450.30px;top:783.90px;font-size:18.9px;color:#0a0a0a;font-weight:700;transform:scaleX(0.9071);">July</span>
<span class="t" style="left:1567.32px;top:783.90px;font-size:18.9px;color:#0a0a0a;font-weight:700;transform:scaleX(0.9422);">August</span>
<span class="t" style="left:1678.51px;top:783.90px;font-size:18.9px;color:#0a0a0a;font-weight:700;transform:scaleX(1.0242);">September</span>
<span class="t" style="left:1822.04px;top:783.90px;font-size:18.9px;color:#0a0a0a;font-weight:700;transform:scaleX(1.0216);">October</span>
<span class="t" style="left:1942.07px;top:783.90px;font-size:18.9px;color:#0a0a0a;font-weight:700;transform:scaleX(1.0282);">November</span>
<span class="t" style="left:2073.60px;top:783.90px;font-size:18.9px;color:#0a0a0a;font-weight:700;transform:scaleX(1.0180);">December</span>
<span class="t" style="left:2231.75px;top:783.90px;font-size:18.9px;color:#0a0a0a;font-weight:700;transform:scaleX(0.9946);">Total</span>
<span class="t" style="left:2353.75px;top:783.90px;font-size:18.9px;color:#0a0a0a;font-weight:700;transform:scaleX(0.9946);">Total</span>
<span class="t" style="left:2329.00px;top:756.80px;font-size:18.9px;color:#0a0a0a;font-weight:700;transform:scaleX(1.0066);">Percent of</span>
<span class="t" style="left:340.00px;top:814.40px;font-size:18.9px;color:#050505;font-weight:700;transform:scaleX(1.0175);">Total</span>
<span class="t" style="left:627.97px;top:814.06px;font-size:19.3px;color:#050505;font-weight:700;transform:scaleX(1.0320);">2,360,052</span>
<span class="t" style="left:758.50px;top:814.06px;font-size:19.3px;color:#050505;font-weight:700;transform:scaleX(1.0320);">2,025,057</span>
<span class="t" style="left:889.03px;top:814.06px;font-size:19.3px;color:#050505;font-weight:700;transform:scaleX(1.0320);">2,041,376</span>
<span class="t" style="left:1019.56px;top:814.06px;font-size:19.3px;color:#050505;font-weight:700;transform:scaleX(1.0320);">2,056,142</span>
<span class="t" style="left:1150.09px;top:814.06px;font-size:19.3px;color:#050505;font-weight:700;transform:scaleX(1.0320);">1,821,560</span>
<span class="t" style="left:1280.62px;top:814.06px;font-size:19.3px;color:#050505;font-weight:700;transform:scaleX(1.0320);">2,185,969</span>
<span class="t" style="left:1411.15px;top:814.06px;font-size:19.3px;color:#050505;font-weight:700;transform:scaleX(1.0320);">1,983,145</span>
<span class="t" style="left:1541.68px;top:814.06px;font-size:19.3px;color:#050505;font-weight:700;transform:scaleX(1.0320);">1,949,944</span>
<span class="t" style="left:1672.21px;top:814.06px;font-size:19.3px;color:#050505;font-weight:700;transform:scaleX(1.0320);">1,996,589</span>
<span class="t" style="left:1802.74px;top:814.06px;font-size:19.3px;color:#050505;font-weight:700;transform:scaleX(1.0320);">2,573,841</span>
<span class="t" style="left:1933.27px;top:814.06px;font-size:19.3px;color:#050505;font-weight:700;transform:scaleX(1.0320);">2,615,666</span>
<span class="t" style="left:2063.80px;top:814.06px;font-size:19.3px;color:#050505;font-weight:700;transform:scaleX(1.0320);">2,001,158</span>
<span class="t" style="left:2188.90px;top:814.06px;font-size:19.3px;color:#050505;font-weight:700;transform:scaleX(1.0320);">25,610,499</span>
<span class="t" style="left:2335.55px;top:814.06px;font-size:19.3px;color:#050505;font-weight:700;transform:scaleX(1.0160);">100.0%</span>
<span class="t" style="left:649.12px;top:970.60px;font-size:18.9px;color:#0a0a0a;font-weight:700;transform:scaleX(0.9701);">January</span>
<span class="t" style="left:774.30px;top:970.60px;font-size:18.9px;color:#0a0a0a;font-weight:700;">February</span>
<span class="t" style="left:916.33px;top:970.60px;font-size:18.9px;color:#0a0a0a;font-weight:700;transform:scaleX(1.0424);">March</span>
<span class="t" style="left:1054.36px;top:970.60px;font-size:18.9px;color:#0a0a0a;font-weight:700;">April</span>
<span class="t" style="left:1186.73px;top:970.60px;font-size:18.9px;color:#0a0a0a;font-weight:700;transform:scaleX(1.0694);">May</span>
<span class="t" style="left:1316.32px;top:970.60px;font-size:18.9px;color:#0a0a0a;font-weight:700;transform:scaleX(0.9344);">June</span>
<span class="t" style="left:1450.30px;top:970.60px;font-size:18.9px;color:#0a0a0a;font-weight:700;transform:scaleX(0.9071);">July</span>
<span class="t" style="left:1567.32px;top:970.60px;font-size:18.9px;color:#0a0a0a;font-weight:700;transform:scaleX(0.9422);">August</span>
<span class="t" style="left:1678.51px;top:970.60px;font-size:18.9px;color:#0a0a0a;font-weight:700;transform:scaleX(1.0242);">September</span>
<span class="t" style="left:1822.04px;top:970.60px;font-size:18.9px;color:#0a0a0a;font-weight:700;transform:scaleX(1.0216);">October</span>
<span class="t" style="left:1942.07px;top:970.60px;font-size:18.9px;color:#0a0a0a;font-weight:700;transform:scaleX(1.0282);">November</span>
<span class="t" style="left:2073.60px;top:970.60px;font-size:18.9px;color:#0a0a0a;font-weight:700;transform:scaleX(1.0180);">December</span>
<span class="t" style="left:2231.75px;top:970.60px;font-size:18.9px;color:#0a0a0a;font-weight:700;transform:scaleX(0.9946);">Total</span>
<span class="t" style="left:2353.75px;top:970.60px;font-size:18.9px;color:#0a0a0a;font-weight:700;transform:scaleX(0.9946);">Total</span>
<span class="t" style="left:2329.00px;top:943.50px;font-size:18.9px;color:#0a0a0a;font-weight:700;transform:scaleX(1.0066);">Percent of</span>
<span class="t" style="left:340.00px;top:1329.20px;font-size:18.9px;color:#050505;font-weight:700;transform:scaleX(1.0175);">Total</span>
<span class="t" style="left:627.97px;top:1328.86px;font-size:19.3px;color:#050505;font-weight:700;transform:scaleX(1.0320);">2,360,052</span>
<span class="t" style="left:758.50px;top:1328.86px;font-size:19.3px;color:#050505;font-weight:700;transform:scaleX(1.0320);">2,025,057</span>
<span class="t" style="left:889.03px;top:1328.86px;font-size:19.3px;color:#050505;font-weight:700;transform:scaleX(1.0320);">2,041,376</span>
<span class="t" style="left:1019.56px;top:1328.86px;font-size:19.3px;color:#050505;font-weight:700;transform:scaleX(1.0320);">2,056,142</span>
<span class="t" style="left:1150.09px;top:1328.86px;font-size:19.3px;color:#050505;font-weight:700;transform:scaleX(1.0320);">1,821,560</span>
<span class="t" style="left:1280.62px;top:1328.86px;font-size:19.3px;color:#050505;font-weight:700;transform:scaleX(1.0320);">2,185,969</span>
<span class="t" style="left:1411.15px;top:1328.86px;font-size:19.3px;color:#050505;font-weight:700;transform:scaleX(1.0320);">1,983,145</span>
<span class="t" style="left:1541.68px;top:1328.86px;font-size:19.3px;color:#050505;font-weight:700;transform:scaleX(1.0320);">1,949,944</span>
<span class="t" style="left:1672.21px;top:1328.86px;font-size:19.3px;color:#050505;font-weight:700;transform:scaleX(1.0320);">1,996,589</span>
<span class="t" style="left:1802.74px;top:1328.86px;font-size:19.3px;color:#050505;font-weight:700;transform:scaleX(1.0320);">2,573,841</span>
<span class="t" style="left:1933.27px;top:1328.86px;font-size:19.3px;color:#050505;font-weight:700;transform:scaleX(1.0320);">2,615,666</span>
<span class="t" style="left:2063.80px;top:1328.86px;font-size:19.3px;color:#050505;font-weight:700;transform:scaleX(1.0320);">2,001,158</span>
<span class="t" style="left:2188.90px;top:1328.86px;font-size:19.3px;color:#050505;font-weight:700;transform:scaleX(1.0320);">25,610,499</span>
<span class="t" style="left:2335.55px;top:1328.86px;font-size:19.3px;color:#050505;font-weight:700;transform:scaleX(1.0160);">100.0%</span>
<span class="t" style="left:270.50px;top:1000.01px;font-size:19.6px;color:#262626;transform:scaleX(1.0093);">1000</span>
<span class="t" style="left:333.20px;top:1000.01px;font-size:19.6px;color:#262626;transform:scaleX(1.0763);">Dr Murry</span>
<span class="t" style="left:655.36px;top:1000.01px;font-size:19.6px;color:#262626;transform:scaleX(1.0200);">53,600</span>
<span class="t" style="left:785.89px;top:1000.01px;font-size:19.6px;color:#262626;transform:scaleX(1.0200);">88,218</span>
<span class="t" style="left:905.32px;top:1000.01px;font-size:19.6px;color:#262626;transform:scaleX(1.0200);">338,528</span>
<span class="t" style="left:1046.95px;top:1000.01px;font-size:19.6px;color:#262626;transform:scaleX(1.0200);">63,748</span>
<span class="t" style="left:1177.48px;top:1000.01px;font-size:19.6px;color:#262626;transform:scaleX(1.0200);">42,604</span>
<span class="t" style="left:1308.01px;top:1000.01px;font-size:19.6px;color:#262626;transform:scaleX(1.0200);">62,005</span>
<span class="t" style="left:1438.54px;top:1000.01px;font-size:19.6px;color:#262626;transform:scaleX(1.0200);">94,767</span>
<span class="t" style="left:1569.07px;top:1000.01px;font-size:19.6px;color:#262626;transform:scaleX(1.0200);">61,959</span>
<span class="t" style="left:1699.60px;top:1000.01px;font-size:19.6px;color:#262626;transform:scaleX(1.0200);">50,407</span>
<span class="t" style="left:1830.13px;top:1000.01px;font-size:19.6px;color:#262626;transform:scaleX(1.0200);">44,132</span>
<span class="t" style="left:1949.56px;top:1000.01px;font-size:19.6px;color:#262626;transform:scaleX(1.0200);">154,729</span>
<span class="t" style="left:2091.19px;top:1000.01px;font-size:19.6px;color:#262626;transform:scaleX(1.0200);">62,960</span>
<span class="t" style="left:2201.07px;top:1000.01px;font-size:19.6px;color:#262626;transform:scaleX(1.0200);">1,117,657</span>
<span class="t" style="left:2357.33px;top:1000.01px;font-size:19.6px;color:#262626;">4.4%</span>
<span class="t" style="left:270.50px;top:1029.97px;font-size:19.6px;color:#262626;transform:scaleX(1.0093);">1001</span>
<span class="t" style="left:333.20px;top:1029.97px;font-size:19.6px;color:#262626;transform:scaleX(0.9693);">Dr Jones</span>
<span class="t" style="left:655.36px;top:1029.97px;font-size:19.6px;color:#262626;transform:scaleX(1.0200);">50,202</span>
<span class="t" style="left:785.89px;top:1029.97px;font-size:19.6px;color:#262626;transform:scaleX(1.0200);">38,491</span>
<span class="t" style="left:916.42px;top:1029.97px;font-size:19.6px;color:#262626;transform:scaleX(1.0200);">69,795</span>
<span class="t" style="left:1046.95px;top:1029.97px;font-size:19.6px;color:#262626;transform:scaleX(1.0200);">86,732</span>
<span class="t" style="left:1166.38px;top:1029.97px;font-size:19.6px;color:#262626;transform:scaleX(1.0200);">204,882</span>
<span class="t" style="left:1308.01px;top:1029.97px;font-size:19.6px;color:#262626;transform:scaleX(1.0200);">65,482</span>
<span class="t" style="left:1438.54px;top:1029.97px;font-size:19.6px;color:#262626;transform:scaleX(1.0200);">42,647</span>
<span class="t" style="left:1557.97px;top:1029.97px;font-size:19.6px;color:#262626;transform:scaleX(1.0200);">163,380</span>
<span class="t" style="left:1688.50px;top:1029.97px;font-size:19.6px;color:#262626;transform:scaleX(1.0200);">123,082</span>
<span class="t" style="left:1830.13px;top:1029.97px;font-size:19.6px;color:#262626;transform:scaleX(1.0200);">22,690</span>
<span class="t" style="left:1949.56px;top:1029.97px;font-size:19.6px;color:#262626;transform:scaleX(1.0200);">322,648</span>
<span class="t" style="left:2091.19px;top:1029.97px;font-size:19.6px;color:#262626;transform:scaleX(1.0200);">86,091</span>
<span class="t" style="left:2199.58px;top:1029.97px;font-size:19.6px;color:#262626;transform:scaleX(1.0200);">1,276,122</span>
<span class="t" style="left:2357.33px;top:1029.97px;font-size:19.6px;color:#262626;">5.0%</span>
<span class="t" style="left:270.50px;top:1059.93px;font-size:19.6px;color:#262626;transform:scaleX(1.0093);">1002</span>
<span class="t" style="left:333.20px;top:1059.93px;font-size:19.6px;color:#262626;transform:scaleX(1.0507);">Dr tiffany</span>
<span class="t" style="left:655.36px;top:1059.93px;font-size:19.6px;color:#262626;transform:scaleX(1.0200);">87,742</span>
<span class="t" style="left:785.89px;top:1059.93px;font-size:19.6px;color:#262626;transform:scaleX(1.0200);">97,303</span>
<span class="t" style="left:905.32px;top:1059.93px;font-size:19.6px;color:#262626;transform:scaleX(1.0200);">176,769</span>
<span class="t" style="left:1046.95px;top:1059.93px;font-size:19.6px;color:#262626;transform:scaleX(1.0200);">72,738</span>
<span class="t" style="left:1166.38px;top:1059.93px;font-size:19.6px;color:#262626;transform:scaleX(1.0200);">196,863</span>
<span class="t" style="left:1298.39px;top:1059.93px;font-size:19.6px;color:#262626;transform:scaleX(1.0200);">211,647</span>
<span class="t" style="left:1430.40px;top:1059.93px;font-size:19.6px;color:#262626;transform:scaleX(1.0200);">111,621</span>
<span class="t" style="left:1557.97px;top:1059.93px;font-size:19.6px;color:#262626;transform:scaleX(1.0200);">182,960</span>
<span class="t" style="left:1688.50px;top:1059.93px;font-size:19.6px;color:#262626;transform:scaleX(1.0200);">104,418</span>
<span class="t" style="left:1830.13px;top:1059.93px;font-size:19.6px;color:#262626;transform:scaleX(1.0200);">98,855</span>
<span class="t" style="left:1960.66px;top:1059.93px;font-size:19.6px;color:#262626;transform:scaleX(1.0200);">79,000</span>
<span class="t" style="left:2091.19px;top:1059.93px;font-size:19.6px;color:#262626;transform:scaleX(1.0200);">67,652</span>
<span class="t" style="left:2199.58px;top:1059.93px;font-size:19.6px;color:#262626;transform:scaleX(1.0200);">1,487,567</span>
<span class="t" style="left:2357.33px;top:1059.93px;font-size:19.6px;color:#262626;">5.8%</span>
<span class="t" style="left:270.50px;top:1089.89px;font-size:19.6px;color:#262626;transform:scaleX(1.0093);">1003</span>
<span class="t" style="left:333.20px;top:1089.89px;font-size:19.6px;color:#262626;transform:scaleX(1.0040);">Dr Bambi</span>
<span class="t" style="left:655.36px;top:1089.89px;font-size:19.6px;color:#262626;transform:scaleX(1.0200);">98,143</span>
<span class="t" style="left:776.27px;top:1089.89px;font-size:19.6px;color:#262626;transform:scaleX(1.0200);">119,930</span>
<span class="t" style="left:916.42px;top:1089.89px;font-size:19.6px;color:#262626;transform:scaleX(1.0200);">68,364</span>
<span class="t" style="left:1046.95px;top:1089.89px;font-size:19.6px;color:#262626;transform:scaleX(1.0200);">93,842</span>
<span class="t" style="left:1177.48px;top:1089.89px;font-size:19.6px;color:#262626;transform:scaleX(1.0200);">78,566</span>
<span class="t" style="left:1308.01px;top:1089.89px;font-size:19.6px;color:#262626;transform:scaleX(1.0200);">89,223</span>
<span class="t" style="left:1427.44px;top:1089.89px;font-size:19.6px;color:#262626;transform:scaleX(1.0200);">195,466</span>
<span class="t" style="left:1557.97px;top:1089.89px;font-size:19.6px;color:#262626;transform:scaleX(1.0200);">103,464</span>
<span class="t" style="left:1699.60px;top:1089.89px;font-size:19.6px;color:#262626;transform:scaleX(1.0200);">99,844</span>
<span class="t" style="left:1830.13px;top:1089.89px;font-size:19.6px;color:#262626;transform:scaleX(1.0200);">66,944</span>
<span class="t" style="left:1951.04px;top:1089.89px;font-size:19.6px;color:#262626;transform:scaleX(1.0200);">115,050</span>
<span class="t" style="left:2080.09px;top:1089.89px;font-size:19.6px;color:#262626;transform:scaleX(1.0200);">126,950</span>
<span class="t" style="left:2199.58px;top:1089.89px;font-size:19.6px;color:#262626;transform:scaleX(1.0200);">1,255,785</span>
<span class="t" style="left:2357.33px;top:1089.89px;font-size:19.6px;color:#262626;">4.9%</span>
<span class="t" style="left:270.50px;top:1119.85px;font-size:19.6px;color:#262626;transform:scaleX(1.0093);">1004</span>
<span class="t" style="left:333.20px;top:1119.85px;font-size:19.6px;color:#262626;transform:scaleX(1.0203);">Dr Bruno</span>
<span class="t" style="left:644.26px;top:1119.85px;font-size:19.6px;color:#262626;transform:scaleX(1.0200);">142,703</span>
<span class="t" style="left:774.79px;top:1119.85px;font-size:19.6px;color:#262626;transform:scaleX(1.0200);">148,233</span>
<span class="t" style="left:905.32px;top:1119.85px;font-size:19.6px;color:#262626;transform:scaleX(1.0200);">125,624</span>
<span class="t" style="left:1035.85px;top:1119.85px;font-size:19.6px;color:#262626;transform:scaleX(1.0200);">235,010</span>
<span class="t" style="left:1166.38px;top:1119.85px;font-size:19.6px;color:#262626;transform:scaleX(1.0200);">124,659</span>
<span class="t" style="left:1296.91px;top:1119.85px;font-size:19.6px;color:#262626;transform:scaleX(1.0200);">244,702</span>
<span class="t" style="left:1427.44px;top:1119.85px;font-size:19.6px;color:#262626;transform:scaleX(1.0200);">148,972</span>
<span class="t" style="left:1557.97px;top:1119.85px;font-size:19.6px;color:#262626;transform:scaleX(1.0200);">171,099</span>
<span class="t" style="left:1688.50px;top:1119.85px;font-size:19.6px;color:#262626;transform:scaleX(1.0200);">245,332</span>
<span class="t" style="left:1819.03px;top:1119.85px;font-size:19.6px;color:#262626;transform:scaleX(1.0200);">354,416</span>
<span class="t" style="left:1949.56px;top:1119.85px;font-size:19.6px;color:#262626;transform:scaleX(1.0200);">572,285</span>
<span class="t" style="left:2080.09px;top:1119.85px;font-size:19.6px;color:#262626;transform:scaleX(1.0200);">241,034</span>
<span class="t" style="left:2199.58px;top:1119.85px;font-size:19.6px;color:#262626;transform:scaleX(1.0200);">2,754,069</span>
<span class="t" style="left:2346.44px;top:1119.85px;font-size:19.6px;color:#262626;">10.8%</span>
<span class="t" style="left:270.50px;top:1149.81px;font-size:19.6px;color:#262626;transform:scaleX(1.0093);">1005</span>
<span class="t" style="left:333.20px;top:1149.81px;font-size:19.6px;color:#262626;transform:scaleX(0.9799);">Dr Jill</span>
<span class="t" style="left:644.26px;top:1149.81px;font-size:19.6px;color:#262626;transform:scaleX(1.0200);">182,867</span>
<span class="t" style="left:774.79px;top:1149.81px;font-size:19.6px;color:#262626;transform:scaleX(1.0200);">521,512</span>
<span class="t" style="left:905.32px;top:1149.81px;font-size:19.6px;color:#262626;transform:scaleX(1.0200);">224,547</span>
<span class="t" style="left:1035.85px;top:1149.81px;font-size:19.6px;color:#262626;transform:scaleX(1.0200);">291,374</span>
<span class="t" style="left:1166.38px;top:1149.81px;font-size:19.6px;color:#262626;transform:scaleX(1.0200);">193,637</span>
<span class="t" style="left:1296.91px;top:1149.81px;font-size:19.6px;color:#262626;transform:scaleX(1.0200);">217,067</span>
<span class="t" style="left:1427.44px;top:1149.81px;font-size:19.6px;color:#262626;transform:scaleX(1.0200);">198,009</span>
<span class="t" style="left:1557.97px;top:1149.81px;font-size:19.6px;color:#262626;transform:scaleX(1.0200);">335,249</span>
<span class="t" style="left:1688.50px;top:1149.81px;font-size:19.6px;color:#262626;transform:scaleX(1.0200);">161,375</span>
<span class="t" style="left:1819.03px;top:1149.81px;font-size:19.6px;color:#262626;transform:scaleX(1.0200);">213,573</span>
<span class="t" style="left:1949.56px;top:1149.81px;font-size:19.6px;color:#262626;transform:scaleX(1.0200);">143,378</span>
<span class="t" style="left:2080.09px;top:1149.81px;font-size:19.6px;color:#262626;transform:scaleX(1.0200);">285,801</span>
<span class="t" style="left:2199.58px;top:1149.81px;font-size:19.6px;color:#262626;transform:scaleX(1.0200);">2,968,391</span>
<span class="t" style="left:2347.89px;top:1149.81px;font-size:19.6px;color:#262626;">11.6%</span>
<span class="t" style="left:270.50px;top:1179.77px;font-size:19.6px;color:#262626;transform:scaleX(1.0093);">1006</span>
<span class="t" style="left:333.20px;top:1179.77px;font-size:19.6px;color:#262626;">Dr Dennis</span>
<span class="t" style="left:644.26px;top:1179.77px;font-size:19.6px;color:#262626;transform:scaleX(1.0200);">374,838</span>
<span class="t" style="left:774.79px;top:1179.77px;font-size:19.6px;color:#262626;transform:scaleX(1.0200);">189,323</span>
<span class="t" style="left:905.32px;top:1179.77px;font-size:19.6px;color:#262626;transform:scaleX(1.0200);">213,079</span>
<span class="t" style="left:1035.85px;top:1179.77px;font-size:19.6px;color:#262626;transform:scaleX(1.0200);">281,477</span>
<span class="t" style="left:1166.38px;top:1179.77px;font-size:19.6px;color:#262626;transform:scaleX(1.0200);">186,681</span>
<span class="t" style="left:1296.91px;top:1179.77px;font-size:19.6px;color:#262626;transform:scaleX(1.0200);">462,817</span>
<span class="t" style="left:1427.44px;top:1179.77px;font-size:19.6px;color:#262626;transform:scaleX(1.0200);">293,414</span>
<span class="t" style="left:1557.97px;top:1179.77px;font-size:19.6px;color:#262626;transform:scaleX(1.0200);">198,775</span>
<span class="t" style="left:1688.50px;top:1179.77px;font-size:19.6px;color:#262626;transform:scaleX(1.0200);">207,333</span>
<span class="t" style="left:1819.03px;top:1179.77px;font-size:19.6px;color:#262626;transform:scaleX(1.0200);">156,170</span>
<span class="t" style="left:1949.56px;top:1179.77px;font-size:19.6px;color:#262626;transform:scaleX(1.0200);">248,093</span>
<span class="t" style="left:2080.09px;top:1179.77px;font-size:19.6px;color:#262626;transform:scaleX(1.0200);">278,726</span>
<span class="t" style="left:2199.58px;top:1179.77px;font-size:19.6px;color:#262626;transform:scaleX(1.0200);">3,090,726</span>
<span class="t" style="left:2346.44px;top:1179.77px;font-size:19.6px;color:#262626;">12.1%</span>
<span class="t" style="left:270.50px;top:1209.73px;font-size:19.6px;color:#262626;transform:scaleX(1.0093);">1007</span>
<span class="t" style="left:333.20px;top:1209.73px;font-size:19.6px;color:#262626;transform:scaleX(0.9916);">Dr Grey</span>
<span class="t" style="left:644.26px;top:1209.73px;font-size:19.6px;color:#262626;transform:scaleX(1.0200);">312,741</span>
<span class="t" style="left:774.79px;top:1209.73px;font-size:19.6px;color:#262626;transform:scaleX(1.0200);">231,705</span>
<span class="t" style="left:905.32px;top:1209.73px;font-size:19.6px;color:#262626;transform:scaleX(1.0200);">271,350</span>
<span class="t" style="left:1035.85px;top:1209.73px;font-size:19.6px;color:#262626;transform:scaleX(1.0200);">207,323</span>
<span class="t" style="left:1166.38px;top:1209.73px;font-size:19.6px;color:#262626;transform:scaleX(1.0200);">297,083</span>
<span class="t" style="left:1296.91px;top:1209.73px;font-size:19.6px;color:#262626;transform:scaleX(1.0200);">339,537</span>
<span class="t" style="left:1427.44px;top:1209.73px;font-size:19.6px;color:#262626;transform:scaleX(1.0200);">227,779</span>
<span class="t" style="left:1557.97px;top:1209.73px;font-size:19.6px;color:#262626;transform:scaleX(1.0200);">140,799</span>
<span class="t" style="left:1688.50px;top:1209.73px;font-size:19.6px;color:#262626;transform:scaleX(1.0200);">206,876</span>
<span class="t" style="left:1819.03px;top:1209.73px;font-size:19.6px;color:#262626;transform:scaleX(1.0200);">479,028</span>
<span class="t" style="left:1949.56px;top:1209.73px;font-size:19.6px;color:#262626;transform:scaleX(1.0200);">349,849</span>
<span class="t" style="left:2080.09px;top:1209.73px;font-size:19.6px;color:#262626;transform:scaleX(1.0200);">237,768</span>
<span class="t" style="left:2199.58px;top:1209.73px;font-size:19.6px;color:#262626;transform:scaleX(1.0200);">3,301,839</span>
<span class="t" style="left:2346.44px;top:1209.73px;font-size:19.6px;color:#262626;">12.9%</span>
<span class="t" style="left:270.50px;top:1239.69px;font-size:19.6px;color:#262626;transform:scaleX(1.0093);">1008</span>
<span class="t" style="left:333.20px;top:1239.69px;font-size:19.6px;color:#262626;transform:scaleX(1.0103);">Dr Smith</span>
<span class="t" style="left:644.26px;top:1239.69px;font-size:19.6px;color:#262626;transform:scaleX(1.0200);">537,163</span>
<span class="t" style="left:774.79px;top:1239.69px;font-size:19.6px;color:#262626;transform:scaleX(1.0200);">301,617</span>
<span class="t" style="left:905.32px;top:1239.69px;font-size:19.6px;color:#262626;transform:scaleX(1.0200);">284,307</span>
<span class="t" style="left:1035.85px;top:1239.69px;font-size:19.6px;color:#262626;transform:scaleX(1.0200);">309,094</span>
<span class="t" style="left:1166.38px;top:1239.69px;font-size:19.6px;color:#262626;transform:scaleX(1.0200);">248,861</span>
<span class="t" style="left:1296.91px;top:1239.69px;font-size:19.6px;color:#262626;transform:scaleX(1.0200);">279,146</span>
<span class="t" style="left:1427.44px;top:1239.69px;font-size:19.6px;color:#262626;transform:scaleX(1.0200);">343,569</span>
<span class="t" style="left:1557.97px;top:1239.69px;font-size:19.6px;color:#262626;transform:scaleX(1.0200);">225,191</span>
<span class="t" style="left:1688.50px;top:1239.69px;font-size:19.6px;color:#262626;transform:scaleX(1.0200);">243,757</span>
<span class="t" style="left:1819.03px;top:1239.69px;font-size:19.6px;color:#262626;transform:scaleX(1.0200);">359,743</span>
<span class="t" style="left:1949.56px;top:1239.69px;font-size:19.6px;color:#262626;transform:scaleX(1.0200);">254,308</span>
<span class="t" style="left:2080.09px;top:1239.69px;font-size:19.6px;color:#262626;transform:scaleX(1.0200);">242,929</span>
<span class="t" style="left:2199.58px;top:1239.69px;font-size:19.6px;color:#262626;transform:scaleX(1.0200);">3,629,685</span>
<span class="t" style="left:2346.44px;top:1239.69px;font-size:19.6px;color:#262626;">14.2%</span>
<span class="t" style="left:270.50px;top:1269.65px;font-size:19.6px;color:#262626;transform:scaleX(1.0093);">1009</span>
<span class="t" style="left:333.20px;top:1269.65px;font-size:19.6px;color:#262626;transform:scaleX(1.0243);">Dr Robert</span>
<span class="t" style="left:644.26px;top:1269.65px;font-size:19.6px;color:#262626;transform:scaleX(1.0200);">520,054</span>
<span class="t" style="left:774.79px;top:1269.65px;font-size:19.6px;color:#262626;transform:scaleX(1.0200);">288,725</span>
<span class="t" style="left:905.32px;top:1269.65px;font-size:19.6px;color:#262626;transform:scaleX(1.0200);">269,012</span>
<span class="t" style="left:1035.85px;top:1269.65px;font-size:19.6px;color:#262626;transform:scaleX(1.0200);">414,805</span>
<span class="t" style="left:1166.38px;top:1269.65px;font-size:19.6px;color:#262626;transform:scaleX(1.0200);">247,724</span>
<span class="t" style="left:1296.91px;top:1269.65px;font-size:19.6px;color:#262626;transform:scaleX(1.0200);">214,343</span>
<span class="t" style="left:1427.44px;top:1269.65px;font-size:19.6px;color:#262626;transform:scaleX(1.0200);">326,902</span>
<span class="t" style="left:1557.97px;top:1269.65px;font-size:19.6px;color:#262626;transform:scaleX(1.0200);">367,069</span>
<span class="t" style="left:1688.50px;top:1269.65px;font-size:19.6px;color:#262626;transform:scaleX(1.0200);">554,164</span>
<span class="t" style="left:1819.03px;top:1269.65px;font-size:19.6px;color:#262626;transform:scaleX(1.0200);">778,291</span>
<span class="t" style="left:1949.56px;top:1269.65px;font-size:19.6px;color:#262626;transform:scaleX(1.0200);">376,324</span>
<span class="t" style="left:2080.09px;top:1269.65px;font-size:19.6px;color:#262626;transform:scaleX(1.0200);">371,245</span>
<span class="t" style="left:2199.58px;top:1269.65px;font-size:19.6px;color:#262626;transform:scaleX(1.0200);">4,728,658</span>
<span class="t" style="left:2346.44px;top:1269.65px;font-size:19.6px;color:#262626;">18.5%</span>
<span class="t" style="left:354.80px;top:1369.06px;font-size:18.6px;color:#217346;font-weight:700;transform:scaleX(1.0581);">Monthly Charge Summaries</span>
<div class="a" style="left:0;top:0;width:2560px;height:1437px;border:6px solid #abadb2;border-radius:37px;box-shadow:0 0 0 60px #fff;"></div>
</div>
</body></html>
